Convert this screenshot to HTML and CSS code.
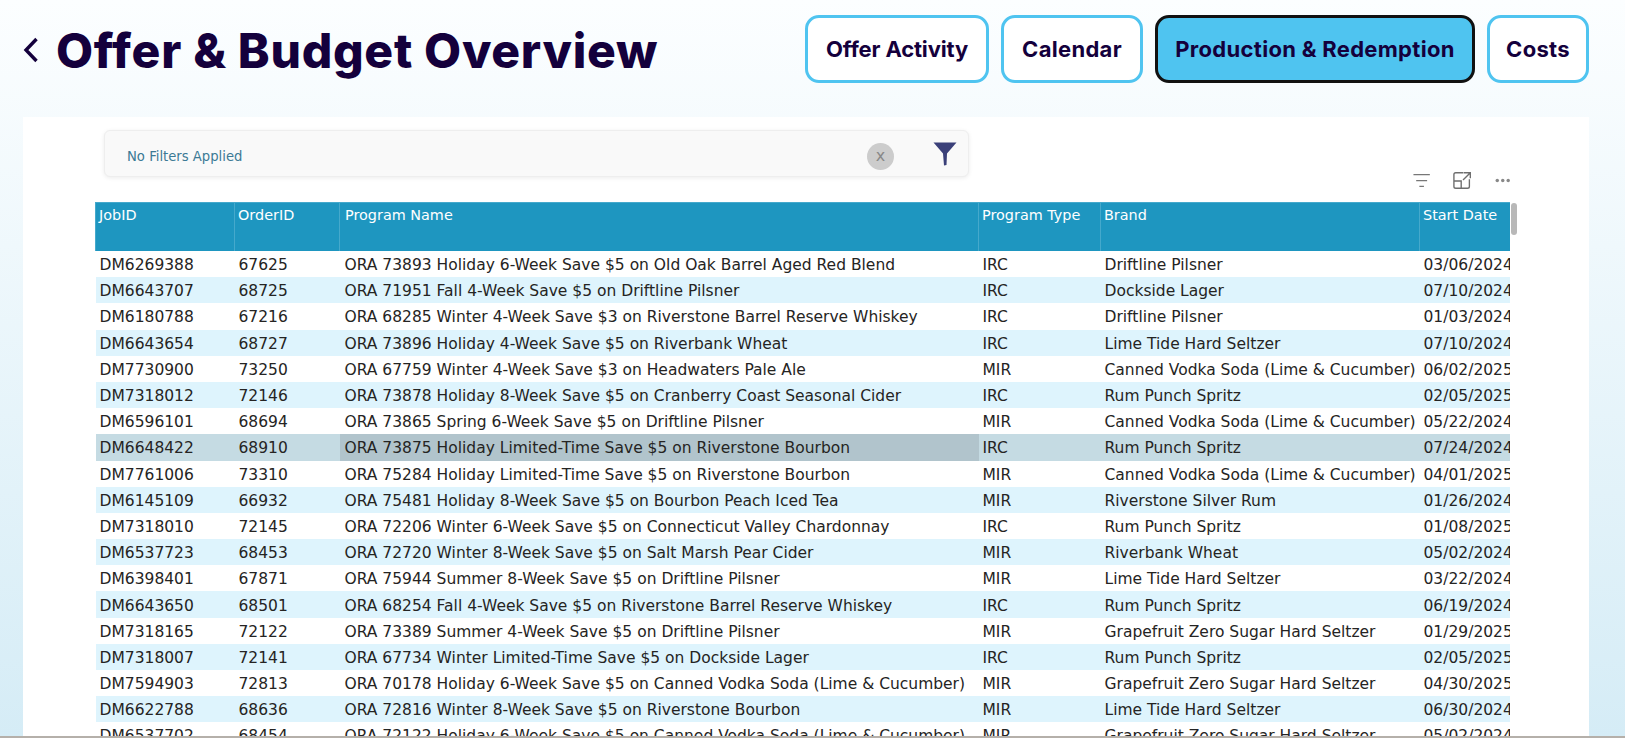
FILE: index.html
```html
<!DOCTYPE html>
<html lang="en">

<head>
    <meta charset="UTF-8">
    <title>Offer &amp; Budget Overview</title>
    <link rel="stylesheet" href="styles.css">
</head>

<body>
    <header class="top-bar">
        <div class="title-group">
            <svg class="back-icon" width="16" height="26" viewBox="0 0 16 26">
                <path d="M13.5 2 L3 13 L13.5 24" fill="none" stroke="#14003c" stroke-width="3.4" />
            </svg>
            <h1>Offer &amp; Budget Overview</h1>
        </div>
        <nav class="tabs">
            <a class="tab tab-offer">Offer Activity</a>
            <a class="tab tab-calendar">Calendar</a>
            <a class="tab tab-production active">Production &amp; Redemption</a>
            <a class="tab tab-costs">Costs</a>
        </nav>
    </header>

    <main class="panel">
        <div class="filter-box">
            <span class="filter-text">No Filters Applied</span>
            <span class="clear-btn">x</span>
            <svg class="funnel-icon" width="24" height="24" viewBox="0 0 24 24">
                <path d="M0.5 0.5 H23.5 L14 11.5 L13.5 23 L11 23.5 L10 11.5 Z" fill="#3b4079" />
            </svg>
        </div>

        <div class="visual-tools">
            <svg width="19" height="16" viewBox="0 0 19 16">
                <path d="M0.5 1 H18.5 M3.5 7.5 H15.5 M7 14 H12" fill="none" stroke="#777" stroke-width="1.3" />
            </svg>
            <svg width="20" height="19" viewBox="0 0 20 19">
                <path d="M11.5 1 H3 Q1 1 1 3 V16 Q1 18 3 18 H16 Q18 18 18 16 V8 M12 1 H19 V7 M19 1 L11 9 M1 10 H9 V18"
                    fill="none" stroke="#6e6e6e" stroke-width="1.5" />
            </svg>
            <svg width="17" height="5" viewBox="0 0 17 5">
                <circle cx="2.5" cy="2.5" r="1.9" fill="#888" />
                <circle cx="8.5" cy="2.5" r="1.9" fill="#888" />
                <circle cx="14.5" cy="2.5" r="1.9" fill="#888" />
            </svg>
        </div>

        <div class="table-wrap">
            <div class="table-clip">
                <table class="job-table">
                    <colgroup>
                        <col class="col-job">
                        <col class="col-order">
                        <col class="col-program">
                        <col class="col-type">
                        <col class="col-brand">
                        <col class="col-date">
                    </colgroup>
                    <thead>
                        <tr>
                            <th>JobID</th>
                            <th>OrderID</th>
                            <th>Program Name</th>
                            <th>Program Type</th>
                            <th>Brand</th>
                            <th>Start Date</th>
                        </tr>
                    </thead>
                    <tbody>
                        <tr><td>DM6269388</td><td>67625</td><td>ORA 73893 Holiday 6-Week Save $5 on Old Oak Barrel Aged Red Blend</td><td>IRC</td><td>Driftline Pilsner</td><td>03/06/2024</td></tr>
                        <tr><td>DM6643707</td><td>68725</td><td>ORA 71951 Fall 4-Week Save $5 on Driftline Pilsner</td><td>IRC</td><td>Dockside Lager</td><td>07/10/2024</td></tr>
                        <tr><td>DM6180788</td><td>67216</td><td>ORA 68285 Winter 4-Week Save $3 on Riverstone Barrel Reserve Whiskey</td><td>IRC</td><td>Driftline Pilsner</td><td>01/03/2024</td></tr>
                        <tr><td>DM6643654</td><td>68727</td><td>ORA 73896 Holiday 4-Week Save $5 on Riverbank Wheat</td><td>IRC</td><td>Lime Tide Hard Seltzer</td><td>07/10/2024</td></tr>
                        <tr><td>DM7730900</td><td>73250</td><td>ORA 67759 Winter 4-Week Save $3 on Headwaters Pale Ale</td><td>MIR</td><td>Canned Vodka Soda (Lime &amp; Cucumber)</td><td>06/02/2025</td></tr>
                        <tr><td>DM7318012</td><td>72146</td><td>ORA 73878 Holiday 8-Week Save $5 on Cranberry Coast Seasonal Cider</td><td>IRC</td><td>Rum Punch Spritz</td><td>02/05/2025</td></tr>
                        <tr><td>DM6596101</td><td>68694</td><td>ORA 73865 Spring 6-Week Save $5 on Driftline Pilsner</td><td>MIR</td><td>Canned Vodka Soda (Lime &amp; Cucumber)</td><td>05/22/2024</td></tr>
                        <tr class="selected"><td>DM6648422</td><td>68910</td><td class="focus-cell">ORA 73875 Holiday Limited-Time Save $5 on Riverstone Bourbon</td><td>IRC</td><td>Rum Punch Spritz</td><td>07/24/2024</td></tr>
                        <tr><td>DM7761006</td><td>73310</td><td>ORA 75284 Holiday Limited-Time Save $5 on Riverstone Bourbon</td><td>MIR</td><td>Canned Vodka Soda (Lime &amp; Cucumber)</td><td>04/01/2025</td></tr>
                        <tr><td>DM6145109</td><td>66932</td><td>ORA 75481 Holiday 8-Week Save $5 on Bourbon Peach Iced Tea</td><td>MIR</td><td>Riverstone Silver Rum</td><td>01/26/2024</td></tr>
                        <tr><td>DM7318010</td><td>72145</td><td>ORA 72206 Winter 6-Week Save $5 on Connecticut Valley Chardonnay</td><td>IRC</td><td>Rum Punch Spritz</td><td>01/08/2025</td></tr>
                        <tr><td>DM6537723</td><td>68453</td><td>ORA 72720 Winter 8-Week Save $5 on Salt Marsh Pear Cider</td><td>MIR</td><td>Riverbank Wheat</td><td>05/02/2024</td></tr>
                        <tr><td>DM6398401</td><td>67871</td><td>ORA 75944 Summer 8-Week Save $5 on Driftline Pilsner</td><td>MIR</td><td>Lime Tide Hard Seltzer</td><td>03/22/2024</td></tr>
                        <tr><td>DM6643650</td><td>68501</td><td>ORA 68254 Fall 4-Week Save $5 on Riverstone Barrel Reserve Whiskey</td><td>IRC</td><td>Rum Punch Spritz</td><td>06/19/2024</td></tr>
                        <tr><td>DM7318165</td><td>72122</td><td>ORA 73389 Summer 4-Week Save $5 on Driftline Pilsner</td><td>MIR</td><td>Grapefruit Zero Sugar Hard Seltzer</td><td>01/29/2025</td></tr>
                        <tr><td>DM7318007</td><td>72141</td><td>ORA 67734 Winter Limited-Time Save $5 on Dockside Lager</td><td>IRC</td><td>Rum Punch Spritz</td><td>02/05/2025</td></tr>
                        <tr><td>DM7594903</td><td>72813</td><td>ORA 70178 Holiday 6-Week Save $5 on Canned Vodka Soda (Lime &amp; Cucumber)</td><td>MIR</td><td>Grapefruit Zero Sugar Hard Seltzer</td><td>04/30/2025</td></tr>
                        <tr><td>DM6622788</td><td>68636</td><td>ORA 72816 Winter 8-Week Save $5 on Riverstone Bourbon</td><td>MIR</td><td>Lime Tide Hard Seltzer</td><td>06/30/2024</td></tr>
                        <tr><td>DM6537702</td><td>68454</td><td>ORA 72122 Holiday 6-Week Save $5 on Canned Vodka Soda (Lime &amp; Cucumber)</td><td>MIR</td><td>Grapefruit Zero Sugar Hard Seltzer</td><td>05/02/2024</td></tr>
                    </tbody>
                </table>
            </div>
            <div class="scroll-thumb"></div>
        </div>
    </main>

    <div class="bottom-line"></div>
</body>

</html>
```

FILE: styles.css
```css
html,
body {
    height: 738px;
    overflow: hidden;
}

body {
    margin: 0;
    display: flex;
    flex-direction: column;
    background: linear-gradient(180deg, #fcfeff, #d5ecf6);
    font-family: "DejaVu Sans", sans-serif;
    color: #252423;
}

.top-bar {
    height: 117px;
    flex: none;
    padding: 15px 36px 0 23px;
    box-sizing: border-box;
    display: flex;
    justify-content: space-between;
    align-items: flex-start;
}

.title-group {
    display: flex;
    align-items: center;
    gap: 17px;
    height: 70px;
}

.title-group h1 {
    margin: 0;
    font-family: Inter, sans-serif;
    font-size: 48px;
    font-weight: 800;
    letter-spacing: 0.7px;
    color: #14003c;
    white-space: nowrap;
}

.back-icon {
    flex: none;
}

.tabs {
    display: flex;
    gap: 12px;
}

.tab {
    height: 68px;
    box-sizing: border-box;
    display: flex;
    align-items: center;
    justify-content: center;
    background: #fff;
    border: 3px solid #4fc4f0;
    border-radius: 14px;
    font-family: Inter, sans-serif;
    font-size: 22px;
    font-weight: 700;
    letter-spacing: 0.3px;
    color: #14003c;
    white-space: nowrap;
}

.tab-offer {
    width: 184px;
    letter-spacing: -0.15px;
}

.tab-calendar {
    width: 142px;
}

.tab-production {
    width: 320px;
}

.tab-costs {
    width: 102px;
}

.tab.active {
    background: #4fc4f0;
    border-color: #111;
}

.panel {
    flex: 1;
    min-height: 0;
    margin: 0 36px 0 23px;
    background: #fff;
    overflow: hidden;
}

.filter-box {
    width: 865px;
    height: 47px;
    box-sizing: border-box;
    margin: 13px 0 0 81px;
    padding: 0 11px 0 22px;
    display: flex;
    align-items: center;
    background: #f9f9f9;
    border: 1px solid #eee;
    border-radius: 6px;
    box-shadow: 0 1px 4px rgba(0, 0, 0, 0.08);
}

.filter-text {
    flex: 1;
    margin-top: 5px;
    font-size: 13.2px;
    color: #3c7a95;
}

.clear-btn {
    width: 27px;
    height: 27px;
    margin-top: 6px;
    margin-right: 39px;
    border-radius: 50%;
    background: #ccc;
    color: #888;
    font-size: 16px;
    line-height: 25px;
    text-align: center;
}

.funnel-icon {
    margin-top: 1px;
}

.visual-tools {
    width: 1415px;
    height: 25px;
    box-sizing: border-box;
    margin: -9px 0 9px 72px;
    padding: 0 0 0 1318px;
    display: flex;
    align-items: center;
    gap: 23px;
}

.table-wrap {
    position: relative;
    width: 1424px;
    margin-left: 72px;
    height: 540px;
}

.table-clip {
    width: 1415px;
    height: 100%;
    overflow: hidden;
}

.job-table {
    width: 1470px;
    table-layout: fixed;
    border-collapse: collapse;
    font-size: 15.5px;
}

.col-job {
    width: 139px;
}

.col-order {
    width: 105px;
}

.col-program {
    width: 639px;
}

.col-type {
    width: 122px;
}

.col-brand {
    width: 319px;
}

.col-date {
    width: 146px;
}

.job-table th {
    height: 48.5px;
    padding: 4px 3px 0;
    box-sizing: border-box;
    background: #1e96c0;
    border-left: 1px solid #45a9cc;
    border-top: 1px solid #45a9cc;
    color: #fff;
    font-size: 14.4px;
    font-weight: 400;
    text-align: left;
    vertical-align: top;
    white-space: nowrap;
}

.job-table td {
    height: 26.2px;
    padding: 2px 4px 0;
    box-sizing: border-box;
    white-space: nowrap;
    overflow: hidden;
}

.job-table th:nth-child(3),
.job-table td:nth-child(3) {
    padding-left: 5px;
}

.job-table tbody tr:nth-child(even) td {
    background: #def4fd;
}

.job-table tbody tr.selected td {
    background: #c5dbe3;
}

.job-table tbody tr.selected td.focus-cell {
    background: #b1c4cc;
}

.scroll-thumb {
    position: absolute;
    top: 1px;
    left: 1416px;
    width: 6px;
    height: 32px;
    border-radius: 3px;
    background: #b8b8b8;
}

.bottom-line {
    height: 2px;
    flex: none;
    background: #b5b0aa;
}
```
